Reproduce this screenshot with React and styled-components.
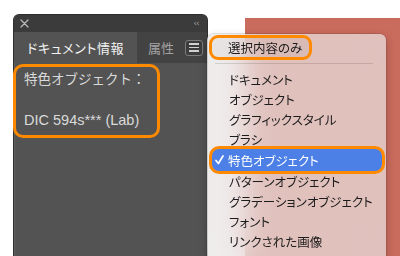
import React from 'react';
import styled, { createGlobalStyle } from 'styled-components';

const GlobalStyle = createGlobalStyle`
  html, body {
    margin: 0;
    padding: 0;
    background: #fff;
  }
  body {
    font-family: "Liberation Sans", "Noto Sans CJK JP", sans-serif;
    -webkit-font-smoothing: antialiased;
  }
`;

const Canvas = styled.div`
  position: relative;
  display: flex;
  align-items: flex-start;
  width: 400px;
  height: 256px;
  padding: 15px 0 0 14px;
  box-sizing: border-box;
  overflow: hidden;
  background: #fff;
`;

const Panel = styled.div`
  flex-shrink: 0;
  width: 193px;
  height: 250px;
  display: flex;
  flex-direction: column;
  background: #535353;
  border-radius: 5px 5px 0 0;
  box-shadow: 0 0 0 1px #2e2e2e, inset 1px 0 0 #626262;
`;

const TitleBar = styled.div`
  height: 17px;
  display: flex;
  align-items: center;
  justify-content: space-between;
  padding: 0 8px 0 6px;
  background: #3b3b3b;
  border-radius: 5px 5px 0 0;
`;

const Collapse = styled.span`
  font-family: "DejaVu Sans", sans-serif;
  font-size: 8px;
  letter-spacing: -0.5px;
  line-height: 1;
  color: #a8a8a8;
`;

const TabRow = styled.div`
  height: 31px;
  display: flex;
  align-items: stretch;
  background: #434343;
`;

const Tab = styled.div`
  display: flex;
  align-items: center;
  padding: ${(p) => (p.$active ? '0 6px 0 13px' : '0 0 0 11px')};
  width: ${(p) => (p.$active ? '123px' : 'auto')};
  box-sizing: border-box;
  background: ${(p) => (p.$active ? '#535353' : 'transparent')};
  color: ${(p) => (p.$active ? '#f4f4f4' : '#a2a2a2')};
  font-size: 13px;
  font-weight: 400;
  letter-spacing: ${(p) => (p.$active ? '0.6px' : '0')};
  font-feature-settings: "palt";
  white-space: nowrap;
`;

const MenuButton = styled.div`
  align-self: center;
  margin: 0 4px 0 auto;
  width: 18px;
  height: 16px;
  box-sizing: border-box;
  border: 1px solid #7c7c7c;
  border-radius: 3px;
  background: #3c3c3c;
  display: flex;
  flex-direction: column;
  justify-content: center;
  align-items: center;
  gap: 2px;

  span {
    display: block;
    width: 10px;
    height: 1.5px;
    background: #d0d0d0;
  }
`;

const Content = styled.div`
  padding-top: 1px;
`;

const InfoBox = styled.div`
  width: 147px;
  height: 74px;
  box-sizing: border-box;
  margin-left: -1px;
  padding: 3px 0 0 8px;
  border: 3px solid #ff8a00;
  border-radius: 10px;
  color: #dadada;
`;

const InfoLine = styled.div`
  height: 20px;
  line-height: 20px;
  font-size: ${(p) => p.$size || 13.5}px;
  white-space: nowrap;
`;

const Artboard = styled.div`
  flex-shrink: 0;
  width: 170px;
  height: 250px;
  margin: 3px 0 0 38px;
  background: #c96b5d;
`;

const Menu = styled.div`
  position: absolute;
  left: 207px;
  top: 34px;
  width: 179px;
  height: 240px;
  padding-top: 1px;
  box-sizing: border-box;
  border-radius: 6px;
  background: rgba(234, 230, 230, 0.7);
  backdrop-filter: blur(14px);
  box-shadow: 0 3px 10px rgba(0, 0, 0, 0.22), 0 0 0 0.5px rgba(0, 0, 0, 0.18);
  font-size: 12.5px;
  font-feature-settings: "palt";
  color: #1c1c1c;
`;

const ScopeItem = styled.div`
  width: 103px;
  height: 25px;
  margin-left: 2px;
  box-sizing: border-box;
  padding-left: 16px;
  display: flex;
  align-items: center;
  border: 3px solid #ff8a00;
  border-radius: 9px;
  background: rgba(0, 0, 0, 0.03);
`;

const Separator = styled.div`
  height: 1px;
  margin: 3px 13px 5px 8px;
  background: rgba(0, 0, 0, 0.13);
`;

const Item = styled.div`
  position: relative;
  display: flex;
  align-items: center;
  height: ${(p) => (p.$checked ? '22px' : '20px')};
  margin: ${(p) => (p.$checked ? '0 4px 0 5px' : '0')};
  padding-left: ${(p) => (p.$checked ? '3px' : '22px')};
  border-radius: 5px;
  background: ${(p) => (p.$checked ? '#4c80e6' : 'transparent')};
  color: ${(p) => (p.$checked ? '#fff' : 'inherit')};
  white-space: nowrap;

  ${(p) =>
    p.$checked &&
    `
    &::before {
      content: '';
      position: absolute;
      inset: -3px;
      border: 3px solid #ff8a00;
      border-radius: 10px;
    }
  `}

  svg {
    margin: 0 4px 0 0;
  }
`;

const items = [
  'ドキュメント',
  'オブジェクト',
  'グラフィックスタイル',
  'ブラシ',
  '特色オブジェクト',
  'パターンオブジェクト',
  'グラデーションオブジェクト',
  'フォント',
  'リンクされた画像',
];

function CloseIcon() {
  return (
    <svg width="9" height="9" viewBox="0 0 9 9">
      <path d="M1 1 L8 8 M8 1 L1 8" stroke="#b8b8b8" strokeWidth="1.3" strokeLinecap="round" />
    </svg>
  );
}

function CheckIcon() {
  return (
    <svg width="9" height="10" viewBox="0 0 9 10">
      <path d="M1 5.5 L3.4 8.5 L8 1" stroke="#fff" strokeWidth="1.7" fill="none" strokeLinecap="round" strokeLinejoin="round" />
    </svg>
  );
}

export default function App() {
  return (
    <>
      <GlobalStyle />
      <Canvas>
        <Panel>
          <TitleBar>
            <CloseIcon />
            <Collapse>‹‹</Collapse>
          </TitleBar>
          <TabRow>
            <Tab $active>ドキュメント情報</Tab>
            <Tab>属性</Tab>
            <MenuButton>
              <span />
              <span />
              <span />
            </MenuButton>
          </TabRow>
          <Content>
            <InfoBox>
              <InfoLine>特色オブジェクト：</InfoLine>
              <InfoLine />
              <InfoLine $size={14.5}>DIC 594s*** (Lab)</InfoLine>
            </InfoBox>
          </Content>
        </Panel>
        <Artboard />
        <Menu>
          <ScopeItem>選択内容のみ</ScopeItem>
          <Separator />
          {items.map((label) => {
            const checked = label === '特色オブジェクト';
            return (
              <Item key={label} $checked={checked}>
                {checked && <CheckIcon />}
                {label}
              </Item>
            );
          })}
        </Menu>
      </Canvas>
    </>
  );
}
